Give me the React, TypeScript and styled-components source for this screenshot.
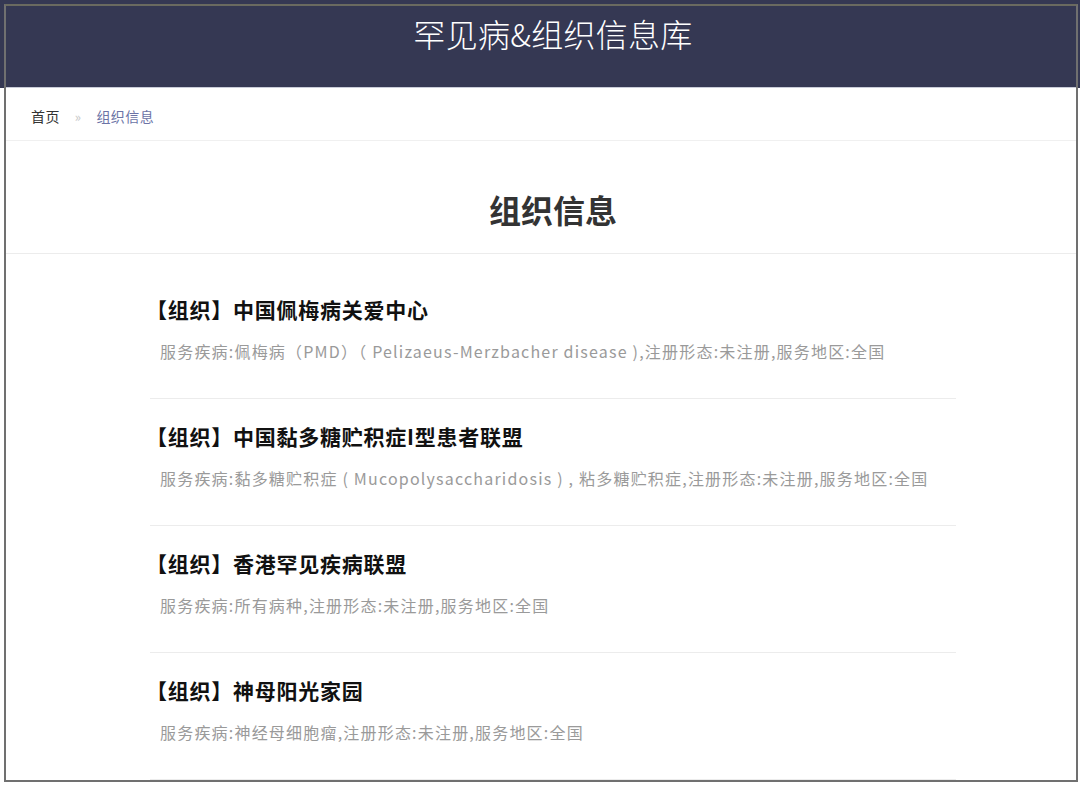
import React from "react";
import styled, { createGlobalStyle } from "styled-components";

const Global = createGlobalStyle`
  html, body { margin: 0; padding: 0; }
  body {
    width: 1080px;
    height: 785px;
    overflow: hidden;
    background: linear-gradient(#353853 0 88px, #ffffff 88px);
    font-family: "Noto Sans CJK SC", "Noto Sans", sans-serif;
  }
`;

const Outer = styled.div`
  padding: 4px 2px 3px 4px;
  height: 785px;
  box-sizing: border-box;
`;

const Frame = styled.div`
  border: 2px solid #707070;
  border-top-color: #6a6a60;
  height: 100%;
  box-sizing: border-box;
  overflow: hidden;
  background: #fff;
`;

const Page = styled.div`
  width: 1094px;
`;

const Header = styled.header`
  height: 82px;
  background: #353853;
  border-bottom: 1px solid #c9ccd8;
  display: flex;
  justify-content: center;
  padding-top: 7px;
  box-sizing: border-box;
`;

const SiteTitle = styled.h1`
  margin: 0;
  color: #ffffff;
  font-size: 32px;
  font-weight: 300;
  line-height: 40px;
  letter-spacing: 0.3px;
`;

const Breadcrumb = styled.nav`
  height: 53px;
  box-sizing: border-box;
  padding-top: 4px;
  display: flex;
  align-items: center;
  padding-left: 25px;
  font-size: 14px;
  letter-spacing: 0.4px;
  border-bottom: 1px solid #f0f0f0;
`;

const Crumb = styled.span<{ $active?: boolean }>`
  color: ${(p) => (p.$active ? "#6b73a6" : "#333")};
`;

const Sep = styled.span`
  color: #c8c8c8;
  margin: 0 15px;
  font-size: 13px;
`;

const Heading = styled.h2`
  margin: 0;
  height: 88px;
  padding-top: 24px;
  display: flex;
  align-items: center;
  justify-content: center;
  font-size: 32px;
  font-weight: 700;
  color: #333;
  border-bottom: 1px solid #ececec;
`;

const List = styled.ul`
  list-style: none;
  margin: 0 auto;
  padding: 18px 0 0 0;
  width: 806px;
`;

const Item = styled.li`
  padding: 22px 0 34px 0;
  border-bottom: 1px solid #ececec;
`;

const ItemTitle = styled.div`
  font-size: 21px;
  font-weight: 700;
  color: #111;
  line-height: 30px;
  letter-spacing: 0.75px;
  margin-left: -4px;
`;

const ItemDesc = styled.div`
  margin-top: 14px;
  padding-left: 10px;
  font-size: 16px;
  letter-spacing: 1.2px;
  color: #9a9a9a;
  line-height: 26px;
  white-space: nowrap;
`;

const items = [
  {
    title: "【组织】中国佩梅病关爱中心",
    desc: "服务疾病:佩梅病（PMD）（ Pelizaeus-Merzbacher disease ),注册形态:未注册,服务地区:全国",
  },
  {
    title: "【组织】中国黏多糖贮积症I型患者联盟",
    desc: "服务疾病:黏多糖贮积症 ( Mucopolysaccharidosis ) , 粘多糖贮积症,注册形态:未注册,服务地区:全国",
  },
  {
    title: "【组织】香港罕见疾病联盟",
    desc: "服务疾病:所有病种,注册形态:未注册,服务地区:全国",
  },
  {
    title: "【组织】神母阳光家园",
    desc: "服务疾病:神经母细胞瘤,注册形态:未注册,服务地区:全国",
  },
];

export default function App() {
  return (
    <>
      <Global />
      <Outer>
        <Frame>
          <Page>
            <Header>
              <SiteTitle>罕见病&amp;组织信息库</SiteTitle>
            </Header>
            <Breadcrumb>
              <Crumb>首页</Crumb>
              <Sep>»</Sep>
              <Crumb $active>组织信息</Crumb>
            </Breadcrumb>
            <Heading>组织信息</Heading>
            <List>
              {items.map((it) => (
                <Item key={it.title}>
                  <ItemTitle>{it.title}</ItemTitle>
                  <ItemDesc>{it.desc}</ItemDesc>
                </Item>
              ))}
            </List>
          </Page>
        </Frame>
      </Outer>
    </>
  );
}
